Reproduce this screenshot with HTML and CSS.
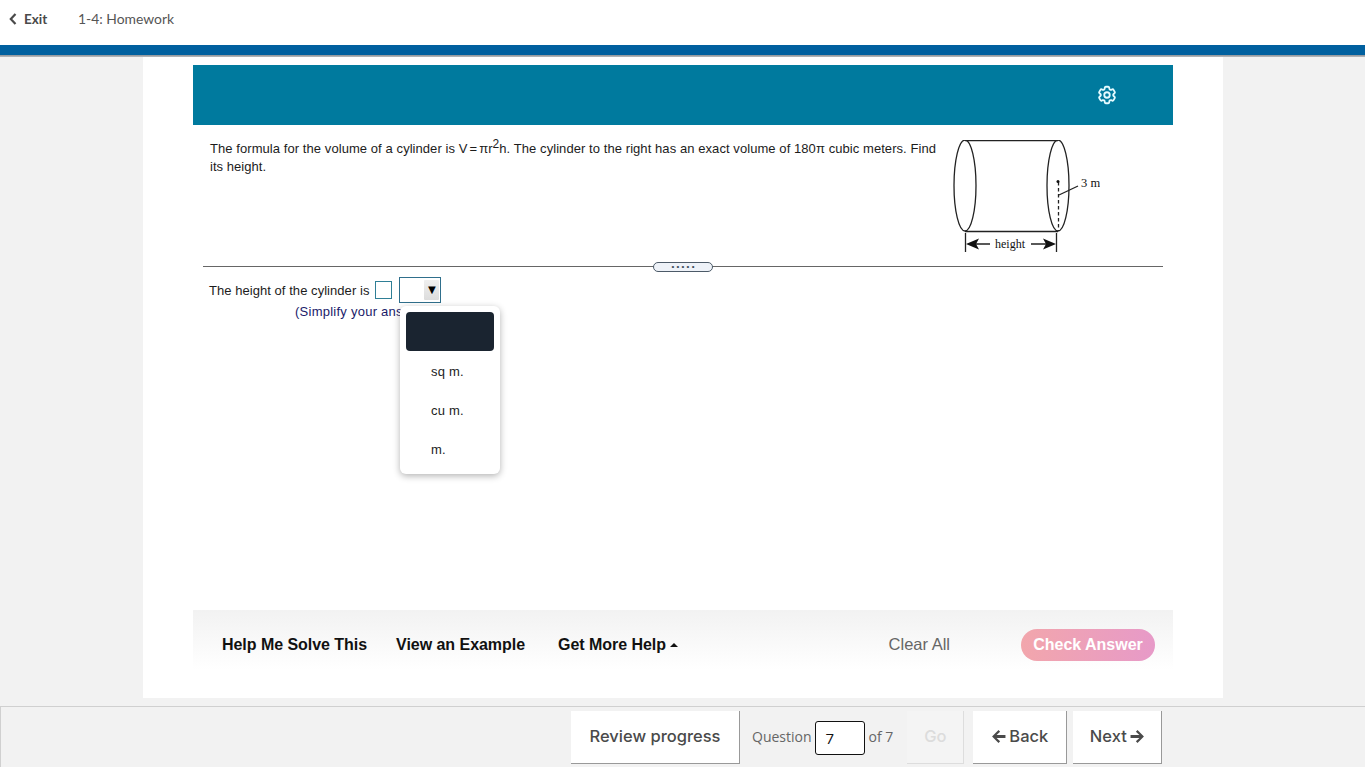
FILE: index.html
```html
<!DOCTYPE html>
<html lang="en">
<head>
<meta charset="utf-8">
<title>1-4: Homework</title>
<link rel="stylesheet" href="styles.css">
</head>
<body>
<header class="topbar">
  <a class="exit"><svg class="exit-icon" width="8" height="12" viewBox="0 0 8 12"><path d="M6.500 1 L1.800 6 L6.500 11" fill="none" stroke="#4a4a4a" stroke-width="2.200"/></svg>Exit</a>
  <span class="title">1-4: Homework</span>
</header>
<div class="stripe"></div>
<main class="sheet">
  <div class="player">
    <div class="banner">
      <svg class="gear" width="22" height="22" viewBox="0 0 24 24" fill="none" stroke="#e6fbff" stroke-width="2" stroke-linejoin="round"><path d="M9.594 3.940c.09-.542.56-.94 1.110-.94h2.593c.55 0 1.020.398 1.110.94l.213 1.281c.063.374.313.686.645.870.074.04.147.083.22.127.325.196.72.257 1.075.124l1.217-.456a1.125 1.125 0 0 1 1.370.49l1.296 2.247a1.125 1.125 0 0 1-.26 1.431l-1.003.827c-.293.241-.438.613-.43.992a7.723 7.723 0 0 1 0 .255c-.008.378.137.75.43.991l1.004.827c.424.35.534.955.26 1.430l-1.298 2.247a1.125 1.125 0 0 1-1.369.491l-1.217-.456c-.355-.133-.75-.072-1.076.124a6.470 6.470 0 0 1-.22.128c-.331.183-.581.495-.644.869l-.213 1.281c-.09.543-.56.94-1.110.94h-2.594c-.55 0-1.019-.398-1.110-.94l-.213-1.281c-.062-.374-.312-.686-.644-.87a6.520 6.520 0 0 1-.22-.127c-.325-.196-.72-.257-1.076-.124l-1.217.456a1.125 1.125 0 0 1-1.369-.49l-1.297-2.247a1.125 1.125 0 0 1 .26-1.431l1.004-.827c.292-.24.437-.613.43-.991a6.932 6.932 0 0 1 0-.255c.007-.38-.138-.751-.43-.992l-1.004-.827a1.125 1.125 0 0 1-.26-1.430l1.297-2.247a1.125 1.125 0 0 1 1.370-.491l1.216.456c.356.133.751.072 1.076-.124.072-.044.146-.086.22-.128.332-.183.582-.495.644-.869l.214-1.280Z"/><circle cx="12" cy="12" r="3"/></svg>
    </div>
    <section class="prompt">
      <p class="prompt-text">The formula for the volume of a cylinder is V<span class="eq">=</span>πr<sup class="sq">2</sup>h. The cylinder to the right has an exact volume of 180π cubic meters. Find its height.</p>
      <svg class="figure" width="150" height="116" viewBox="0 0 150 116">
        <g fill="none" stroke="#222" stroke-width="1.300">
          <ellipse cx="15" cy="45.500" rx="11" ry="45.500"/>
          <ellipse cx="108" cy="45.500" rx="11" ry="45.500"/>
          <path d="M15 0.500H108M15 91.500H108"/>
          <path d="M108.500 42V91" stroke-dasharray="3.500 2.500"/>
          <path d="M109 55L128 46"/>
          <path d="M15.500 93V112M106.500 93V112M26 104H40M81 104H96"/>
        </g>
        <circle cx="108" cy="41.500" r="1.500" fill="#111"/>
        <path d="M16 104L29 98.500L26 104L29 109.500ZM106 104L93 98.500L96 104L93 109.500Z" fill="#111"/>
        <text x="131" y="47" class="fig-label">3 m</text>
        <text x="45" y="108" class="fig-label fig-small">height</text>
      </svg>
    </section>
    <div class="divider"><span class="handle">• • • • •</span></div>
    <section class="answer">
      <div class="answer-line">
        <span>The height of the cylinder is</span>
        <span class="blank"></span>
        <span class="select"><span class="select-arrow">▼</span></span>
      </div>
      <div class="hint">(Simplify your answer.)</div>
      <ul class="menu">
        <li class="menu-item menu-selected"></li>
        <li class="menu-item">sq m.</li>
        <li class="menu-item">cu m.</li>
        <li class="menu-item">m.</li>
      </ul>
    </section>
    <div class="toolbar">
      <a class="tool tool-help">Help Me Solve This</a>
      <a class="tool tool-example">View an Example</a>
      <a class="tool tool-more">Get More Help <span class="caret"></span></a>
      <a class="clear">Clear All</a>
      <a class="check">Check Answer</a>
    </div>
  </div>
</main>
<footer class="footer">
  <a class="btn btn-review">Review progress</a>
  <span class="q-label">Question</span>
  <span class="q-input">7</span>
  <span class="q-label q-of">of 7</span>
  <a class="btn btn-go">Go</a>
  <a class="btn btn-back"><svg width="15" height="15" viewBox="0 0 14 14"><path d="M7 1L1 7L7 13L8.500 11.500L5.200 8.500H13.500V5.500H5.200L8.500 2.500Z" fill="#4a4a4a"/></svg>Back</a>
  <a class="btn btn-next">Next<svg width="15" height="15" viewBox="0 0 14 14"><path d="M7 1L13 7L7 13L5.500 11.500L8.800 8.500H0.500V5.500H8.800L5.500 2.500Z" fill="#4a4a4a"/></svg></a>
</footer>
</body>
</html>
```
FILE: styles.css
```css
* { box-sizing: border-box; }
html, body { margin: 0; height: 767px; overflow: hidden; }
body {
  background: #f2f2f2;
  font-family: "Liberation Sans", Arial, sans-serif;
  display: flex;
  flex-direction: column;
}
.topbar {
  height: 45px;
  background: #fff;
  display: flex;
  align-items: center;
  padding: 0 0 8px 9px;
  font-family: Lato, sans-serif;
  font-size: 14px;
  color: #555;
}
.exit { display: flex; align-items: center; font-weight: 700; font-size: 13.500px; color: #4a4a4a; width: 69px; }
.exit-icon { margin-right: 7px; }
.title { color: #555; font-size: 13.900px; }
.stripe {
  height: 12px;
  background: linear-gradient(#00609f 10px, #8d9196 10px, #b9bcc0);
  flex: none;
}
.sheet {
  width: 1080px;
  height: 641px;
  margin-left: 143px;
  background: #fff;
  padding: 8px 50px 0;
  flex: none;
}
.player { position: relative; height: 633px; display: flex; flex-direction: column; }
.banner {
  height: 60px;
  background: #007a9e;
  display: flex;
  align-items: center;
  justify-content: flex-end;
  padding-right: 55px;
  flex: none;
}
.prompt {
  height: 135px;
  padding: 15px 0 0 17px;
  display: flex;
  flex: none;
  color: #1c1c1c;
}
.prompt-text {
  margin: 0;
  width: 726px;
  font-size: 13px;
  letter-spacing: .05px;
  line-height: 18px;
  text-align: justify;
}
.eq { margin: 0 2px; }
.sq { font-size: 12px; line-height: 0; vertical-align: 5px; }
.figure { margin: 0 0 0 14px; flex: none; display: block; }
.fig-label { font-family: "Liberation Serif", serif; font-size: 12.500px; fill: #111; }
.fig-small { font-size: 12px; }
.divider {
  height: 1px;
  margin: 6px 10px 0;
  background: #666;
  display: flex;
  justify-content: center;
  align-items: center;
  flex: none;
}
.handle {
  width: 60px;
  height: 10px;
  background: #eef2f8;
  border: 1px solid #4c5a68;
  border-radius: 5px;
  font-size: 8px;
  line-height: 7px;
  text-align: center;
  color: #3a4a5a;
  white-space: nowrap;
  overflow: hidden;
}
.answer {
  position: relative;
  flex: 1;
  padding: 10px 0 0 16px;
  font-size: 13px;
  letter-spacing: .05px;
  color: #1c1c1c;
}
.answer-line { display: flex; align-items: center; height: 26px; }
.blank {
  width: 17px;
  height: 18px;
  border: 1px solid #2f7f96;
  margin-left: 6px;
}
.select {
  width: 42px;
  height: 26px;
  border: 1px solid #2f6f8c;
  margin-left: 7px;
  display: flex;
  justify-content: flex-end;
  align-items: center;
  padding-right: 1px;
}
.select-arrow {
  width: 15px;
  height: 20px;
  background: linear-gradient(#efefef, #dcdcdc);
  border-radius: 1px;
  color: #000;
  font-size: 13px;
  line-height: 20px;
  text-align: center;
}
.hint { color: #1a1a6a; margin: 0 0 0 86px; line-height: 18px; letter-spacing: .25px; }
.menu {
  position: absolute;
  left: 207px;
  top: 39px;
  width: 100px;
  height: 168px;
  margin: 0;
  padding: 6px;
  list-style: none;
  background: #fff;
  border-radius: 6px;
  box-shadow: 0 2px 7px rgba(0, 0, 0, .3);
  font-size: 13px;
  color: #222;
}
.menu-item {
  height: 39px;
  line-height: 41px;
  padding-left: 25px;
  letter-spacing: .2px;
}
.menu-selected { background: #1a2430; border-radius: 4px; }
.toolbar {
  height: 60px;
  margin-bottom: 28px;
  background: linear-gradient(#f2f2f2, #fff);
  display: flex;
  align-items: center;
  font-size: 16px;
  padding-top: 9px;
  flex: none;
}
.tool { font-weight: 700; color: #111; letter-spacing: -.04px; }
.tool-help { margin-left: 29px; }
.tool-example { margin-left: 29px; }
.tool-more { margin-left: 33px; }
.caret {
  display: inline-block;
  border: 4px solid transparent;
  border-top: 0;
  border-bottom-color: #111;
  vertical-align: 3px;
}
.clear { margin-left: auto; color: #666; font-size: 16.500px; }
.check {
  margin: 0 18px 0 71px;
  width: 134px;
  height: 32px;
  line-height: 32px;
  border-radius: 16px;
  background: linear-gradient(90deg, #f2a6ac, #e79ac8);
  color: #fff;
  font-weight: 700;
  font-size: 16px;
  text-align: center;
}
.footer {
  margin-top: 8px;
  height: 61px;
  flex: none;
  border-top: 1px solid #d0d0d0;
  border-left: 1px solid #d0d0d0;
  background: #f2f2f2;
  display: flex;
  align-items: flex-start;
  padding: 4px 0 0 570px;
  font-family: Inter, sans-serif;
  color: #4a4a4a;
}
.btn {
  height: 53px;
  padding-bottom: 2px;
  background: #fff;
  border-right: 1px solid #999;
  border-bottom: 1px solid #999;
  display: flex;
  align-items: center;
  justify-content: center;
  gap: 3px;
  font-size: 16.500px;
  font-weight: 500;
  flex: none;
}
.btn-review { width: 169px; }
.q-label {
  font-family: "Open Sans", sans-serif;
  font-size: 14px;
  line-height: 52px;
  color: #666;
  margin-left: 12px;
}
.q-input {
  width: 50px;
  height: 34px;
  margin: 10px 0 0 3px;
  border: 1px solid #111;
  border-radius: 3px;
  background: #fff;
  color: #111;
  font-family: "Open Sans", sans-serif;
  font-size: 15px;
  line-height: 33px;
  padding-left: 10px;
}
.q-of { margin-left: 4px; }
.btn-go {
  width: 57px;
  margin-left: 14px;
  background: #f4f4f4;
  border-right-color: #ddd;
  border-bottom-color: #ddd;
  color: #dcdcdc;
}
.btn-back { width: 94px; margin-left: 9px; }
.btn-next { width: 89px; margin-left: 6px; }
```
